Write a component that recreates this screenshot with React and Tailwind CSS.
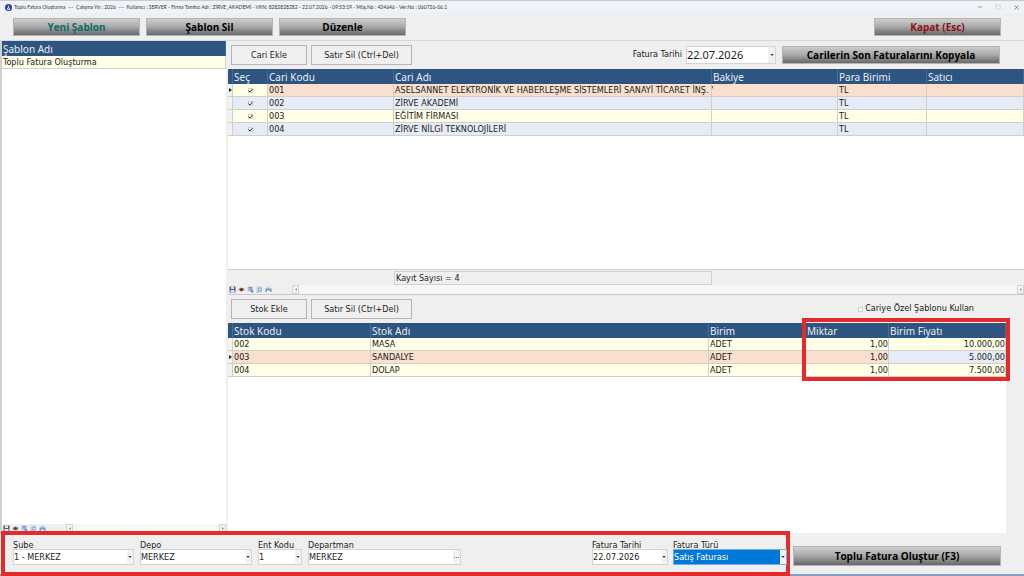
import React from "react";
import { FiMinus, FiSquare, FiX } from "react-icons/fi";

const cariler = [
  { kod: "001", ad: "ASELSANNET ELEKTRONİK VE HABERLEŞME SİSTEMLERİ SANAYİ TİCARET İNŞ. '", para: "TL" },
  { kod: "002", ad: "ZİRVE AKADEMİ", para: "TL" },
  { kod: "003", ad: "EĞİTİM FİRMASI", para: "TL" },
  { kod: "004", ad: "ZİRVE NİLGİ TEKNOLOJİLERİ", para: "TL" },
];

const stoklar = [
  { kod: "002", ad: "MASA", birim: "ADET", miktar: "1,00", fiyat: "10.000,00" },
  { kod: "003", ad: "SANDALYE", birim: "ADET", miktar: "1,00", fiyat: "5.000,00" },
  { kod: "004", ad: "DOLAP", birim: "ADET", miktar: "1,00", fiyat: "7.500,00" },
];

const rowColor = (i) => (i === 0 ? "bg-[#f8dfce]" : i % 2 ? "bg-[#e6ecf7]" : "bg-[#ffffe8]");

function MetalButton({ className = "", children }) {
  return (
    <button
      className={`border border-[#b4b4b4] bg-linear-to-b from-[#cdcdcd] via-[#a8a8a8] to-[#686868] text-center font-['Open_Sans','Noto_Sans',sans-serif] text-[10px] leading-4 font-bold ${className}`}
    >
      {children}
    </button>
  );
}

function FlatButton({ className = "", children }) {
  return (
    <button className={`h-5 border border-[#b5b5b5] bg-[#efefef] text-[9px] leading-3 ${className}`}>
      {children}
    </button>
  );
}

function Arrow() {
  return (
    <svg viewBox="0 0 5 3" className="h-[2px] w-1">
      <path d="M0 0h5L2.5 3z" fill="#333" />
    </svg>
  );
}

function SelectField({ id, label, value, width, selected }) {
  return (
    <div className={width}>
      <label htmlFor={id} className="block h-[10px] leading-3">{label}</label>
      <div className="relative">
        <select
          id={id}
          className={`block h-4 w-full appearance-none border pr-2 leading-3 ${
            selected ? "border-[#6aaee8] bg-[#0078d7] text-white" : "border-[#d4d4d4] bg-white"
          }`}
        >
          <option>{value}</option>
        </select>
        <span className="pointer-events-none absolute inset-y-px right-px flex w-[6px] items-center justify-center bg-[#f2f2f2]">
          <Arrow />
        </span>
      </div>
    </div>
  );
}

function GridTools() {
  return (
    <div className="flex gap-[2px]">
      <button aria-label="Kaydet">
        <svg viewBox="0 0 14 14" className="size-[7px]">
          <path d="M1 1h12v12H1z" fill="#4d5f76" />
          <path d="M4 1h6v5H4zM3 8h8v5H3z" fill="#dce6f2" />
        </svg>
      </button>
      <button aria-label="Göster">
        <svg viewBox="0 0 14 14" className="size-[7px]">
          <path d="M0 7q7-8 14 0q-7 8-14 0z" fill="#b5957c" />
          <circle cx="7" cy="7" r="3" fill="#4b3a30" />
        </svg>
      </button>
      <button aria-label="Excel">
        <svg viewBox="0 0 14 14" className="size-[7px]">
          <path d="M1 1h11v10H1z" fill="#b4cbe8" />
          <path d="M3 3h7M3 6h7M6 9h5" stroke="#5c82ba" strokeWidth="1.5" />
          <path d="M8 9h5v4H8z" fill="#6a90c4" />
        </svg>
      </button>
      <button aria-label="Ara">
        <svg viewBox="0 0 14 14" className="size-[7px]">
          <path d="M1 1h11v12H1z" fill="#bcd2ee" />
          <circle cx="8" cy="7" r="3" fill="#eaf4ff" stroke="#5a8ac4" strokeWidth="1.5" />
          <path d="M5 10l-3 3" stroke="#b58a50" strokeWidth="2" />
        </svg>
      </button>
      <button aria-label="Yazdır">
        <svg viewBox="0 0 14 14" className="size-[7px]">
          <path d="M3 1h8v11H3z" fill="#c4d6f0" />
          <path d="M1 5h12v7H1z" fill="#7898cc" />
          <path d="M4 9h6v4H4z" fill="#f4f8ff" />
        </svg>
      </button>
    </div>
  );
}

function ScrollBar() {
  return (
    <div className="flex h-full flex-1 items-center justify-between bg-[#f7f7f7]">
      <button aria-label="Sola kaydır" className="flex h-full w-[7px] items-center justify-center border border-[#d4d4d4] bg-[#f2f2f2]">
        <svg viewBox="0 0 3 4" className="h-[3px] w-[2px]"><path d="M3 0v4L0 2z" fill="#888" /></svg>
      </button>
      <button aria-label="Sağa kaydır" className="flex h-full w-[7px] items-center justify-center border border-[#d4d4d4] bg-[#f2f2f2]">
        <svg viewBox="0 0 3 4" className="h-[3px] w-[2px]"><path d="M0 0v4l3-2z" fill="#888" /></svg>
      </button>
    </div>
  );
}

function Marker() {
  return (
    <svg viewBox="0 0 3 4" className="h-1 w-[3px]"><path d="M0 0v4l3-2z" fill="#222" /></svg>
  );
}

function RowCheck({ label }) {
  return (
    <span className="grid h-3 place-items-center">
      <input
        type="checkbox"
        defaultChecked
        aria-label={label}
        className="peer col-start-1 row-start-1 size-[5px] appearance-none border border-[#cfcfcf] bg-white"
      />
      <svg viewBox="0 0 10 10" className="pointer-events-none invisible col-start-1 row-start-1 size-[5px] peer-checked:visible">
        <path d="M1 5l3 3L9 2" fill="none" stroke="#333" strokeWidth="2" />
      </svg>
    </span>
  );
}

const thead = "bg-[#2e5480] font-['Noto_Sans',sans-serif] text-[10px] text-[#e8eef6]";
const th = "h-[15px] overflow-hidden whitespace-nowrap border-r border-[#4a6a92] p-0 pl-px text-left font-normal leading-3";
const td = "h-[13px] whitespace-nowrap border-r border-b border-r-[#d0d0c8] border-b-[#d0d0c8] p-0 pl-px leading-3";

export default function App() {
  return (
    <div className="flex min-h-screen flex-col border-b-2 border-b-[#7f9dc6] bg-[#efefef] font-['DejaVu_Sans_Condensed','Noto_Sans',sans-serif] text-[9px] text-[#1c1c1c]">
      {/* Window title */}
      <header className="flex h-[13px] items-center border-t border-[#c8ccd0] bg-[#eef3f9] pl-[5px]">
        <svg viewBox="0 0 14 14" className="size-[7px]">
          <circle cx="7" cy="7" r="7" fill="#2342b0" />
          <path d="M7 3v5M5 8h4v3H5z" stroke="#fff" strokeWidth="1.5" fill="none" />
        </svg>
        <h1 className="ml-[2px] flex-1 whitespace-pre font-[Lato,sans-serif] text-[5px] leading-3 text-[#333]">
          {"Toplu Fatura Oluşturma  ---  Çalışma Yılı : 2026  ---  Kullanıcı : SERVER - Firma Tanıtıcı Adı : ZİRVE_AKADEMİ - VKN: 8282828282 - 22.07.2026 - 09:53:19 - Müş.No : 424646 - Ver.No : 060726-06.1"}
        </h1>
        <div className="flex items-center gap-3 pr-1 text-[#444]">
          <button aria-label="Küçült"><FiMinus size={6} /></button>
          <button aria-label="Ekranı kapla" className="text-[#bbb]"><FiSquare size={6} /></button>
          <button aria-label="Pencereyi kapat"><FiX size={7} /></button>
        </div>
      </header>

      <div className="flex h-7 items-center gap-[6px] border-b border-[#d8d8d8] pr-[23px] pl-[13px]">
        <MetalButton className="h-[18px] w-[127px] text-[#0d6b66]">Yeni Şablon</MetalButton>
        <MetalButton className="h-[18px] w-[127px] text-black">Şablon Sil</MetalButton>
        <MetalButton className="h-[18px] w-[127px] text-black">Düzenle</MetalButton>
        <MetalButton className="ml-auto h-[18px] w-[127px] text-[#8c1014]">Kapat (Esc)</MetalButton>
      </div>

      <main className="flex flex-1">
        <aside className="flex w-[226px] flex-col border-l-2 border-[#d0d0d0] bg-white">
          <table className="w-full table-fixed border-separate border-spacing-0">
            <thead className={thead}>
              <tr><th className={th}>Şablon Adı</th></tr>
            </thead>
            <tbody>
              <tr className="bg-[#ffffe8]"><td className={td}>Toplu Fatura Oluşturma</td></tr>
            </tbody>
          </table>
          <div className="mt-auto flex h-[9px] items-center gap-5 bg-[#efefef] pl-px">
            <GridTools />
            <ScrollBar />
          </div>
        </aside>

        <div className="ml-[2px] flex min-w-0 flex-1 flex-col">
          <section className="flex h-[254px] flex-col border-b border-[#c8c8c8]">
            <div className="flex h-7 items-center gap-1 pr-6 pl-[3px]">
              <FlatButton className="w-[76px]">Cari Ekle</FlatButton>
              <FlatButton className="w-[101px]">Satır Sil (Ctrl+Del)</FlatButton>
              <label htmlFor="fatura-tarihi" className="ml-auto">Fatura Tarihi</label>
              <div className="flex h-[18px] w-[90px] items-center border border-[#d4d4d4] bg-white">
                <input id="fatura-tarihi" defaultValue="22.07.2026" className="min-w-0 flex-1 font-['Noto_Sans',sans-serif] text-[11px] leading-4 outline-none" />
                <button aria-label="Takvim" className="flex h-full w-[7px] items-center justify-center bg-[#f2f2f2]"><Arrow /></button>
              </div>
              <MetalButton className="ml-[2px] h-[18px] w-[218px] text-black">
                Carilerin Son Faturalarını Kopyala
              </MetalButton>
            </div>
            <div className="flex-1 bg-white">
              <table className="w-full table-fixed border-separate border-spacing-0">
                <colgroup>
                  <col className="w-[5px]" /><col className="w-[35px]" /><col className="w-[126px]" />
                  <col className="w-[318px]" /><col className="w-[126px]" /><col className="w-[89px]" /><col />
                </colgroup>
                <thead className={thead}>
                  <tr>
                    <th className={th}></th><th className={th}>Seç</th><th className={th}>Cari Kodu</th>
                    <th className={th}>Cari Adı</th><th className={th}>Bakiye</th>
                    <th className={th}>Para Birimi</th><th className={th}>Satıcı</th>
                  </tr>
                </thead>
                <tbody>
                  {cariler.map((c, i) => (
                    <tr key={c.kod} className={rowColor(i)}>
                      <td className={`${td} bg-[#f2f2f2]`}>{i === 0 && <Marker />}</td>
                      <td className={`${td} ${i === 0 ? "bg-[#ffffe8]" : ""}`}>
                        <RowCheck label={`${c.kod} seç`} />
                      </td>
                      <td className={td}>{c.kod}</td>
                      <td className={td}>{c.ad}</td>
                      <td className={td}></td>
                      <td className={td}>{c.para}</td>
                      <td className={td}></td>
                    </tr>
                  ))}
                </tbody>
              </table>
            </div>
            <div className="flex h-4 border-t border-[#d0d0d0] pl-[166px]">
              <div className="mt-px w-[318px] border border-[#d0d0d0] pl-px leading-3">Kayıt Sayısı = 4</div>
            </div>
            <div className="flex h-[9px] items-center gap-5 pl-px">
              <GridTools />
              <ScrollBar />
            </div>
          </section>

          <section className="flex flex-1 flex-col">
            <div className="flex h-7 items-center gap-1 pr-[50px] pl-[3px]">
              <FlatButton className="w-[76px]">Stok Ekle</FlatButton>
              <FlatButton className="w-[101px]">Satır Sil (Ctrl+Del)</FlatButton>
              <label className="ml-auto flex items-center gap-[2px]">
                <input type="checkbox" className="size-[5px] appearance-none border border-[#d0d0d0] bg-white" />
                Cariye Özel Şablonu Kullan
              </label>
            </div>
            <div className="relative mr-[18px] flex-1 bg-white">
              <table className="w-full table-fixed border-separate border-spacing-0">
                <colgroup>
                  <col className="w-[5px]" /><col className="w-[138px]" /><col />
                  <col className="w-[97px]" /><col className="w-[83px]" /><col className="w-[117px]" />
                </colgroup>
                <thead className={thead}>
                  <tr>
                    <th className={th}></th><th className={th}>Stok Kodu</th><th className={th}>Stok Adı</th>
                    <th className={th}>Birim</th><th className={th}>Miktar</th><th className={th}>Birim Fiyatı</th>
                  </tr>
                </thead>
                <tbody>
                  {stoklar.map((s, i) => (
                    <tr key={s.kod} className={i === 1 ? "bg-[#f8dfce]" : "bg-[#ffffe8]"}>
                      <td className={`${td} bg-[#f2f2f2]`}>{i === 1 && <Marker />}</td>
                      <td className={td}>{s.kod}</td>
                      <td className={td}>{s.ad}</td>
                      <td className={td}>{s.birim}</td>
                      <td className={`${td} text-right`}>{s.miktar}</td>
                      <td className={`${td} text-right ${i === 1 ? "bg-[#e6ecf7]" : ""}`}>{s.fiyat}</td>
                    </tr>
                  ))}
                </tbody>
              </table>
              {/* Highlight around quantity and price */}
              <div className="pointer-events-none absolute -top-[5px] -right-1 h-[63px] w-[208px] border-4 border-[#e42a2a]"></div>
            </div>
          </section>
        </div>
      </main>

      <footer className="relative flex h-[41px] items-start pt-[6px] pr-[23px] pl-[13px]">
        <div className="pointer-events-none absolute -top-[2px] -bottom-[2px] left-px right-[234px] border-4 border-[#e42a2a]"></div>
        <div className="flex flex-1 gap-[6px]">
          <SelectField id="sube" label="Şube" value="1 - MERKEZ" width="w-[121px]" />
          <SelectField id="depo" label="Depo" value="MERKEZ" width="w-[112px]" />
          <SelectField id="ent" label="Ent Kodu" value="1" width="w-[44px]" />
          <div className="w-[153px]">
            <label htmlFor="departman" className="block h-[10px] leading-3">Departman</label>
            <div className="flex h-4 items-center border border-[#d4d4d4] bg-white">
              <input id="departman" defaultValue="MERKEZ" className="h-full min-w-0 flex-1 outline-none" />
              <button aria-label="Departman seç" className="flex h-full w-[7px] items-center justify-center bg-[#f2f2f2]">
                <svg viewBox="0 0 5 1" className="h-px w-[5px]"><path d="M0 0h1v1H0zM2 0h1v1H2zM4 0h1v1H4z" fill="#777" /></svg>
              </button>
            </div>
          </div>
        </div>
        <div className="mr-[6px] flex gap-[5px]">
          <SelectField id="tarih" label="Fatura Tarihi" value="22.07.2026" width="w-[76px]" />
          <SelectField id="tur" label="Fatura Türü" value="Satış Faturası" width="w-[114px]" selected />
        </div>
        <MetalButton className="mt-[7px] h-5 w-[208px] text-black">Toplu Fatura Oluştur (F3)</MetalButton>
      </footer>
    </div>
  );
}
